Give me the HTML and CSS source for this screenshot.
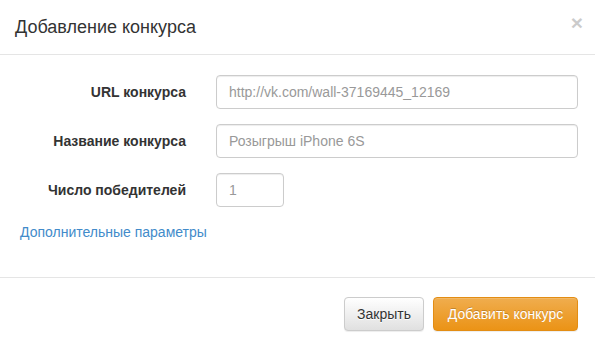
FILE: index.html
```html
<!DOCTYPE html>
<html lang="ru">
<head>
<meta charset="utf-8">
<title>Добавление конкурса</title>
<link rel="stylesheet" href="styles.css">
</head>
<body>
<div class="modal">
  <div class="modal-header">
    <h4 class="modal-title">Добавление конкурса</h4>
    <button class="close" type="button">×</button>
  </div>
  <form class="modal-body">
    <div class="form-group">
      <label class="control-label">URL конкурса</label>
      <input class="form-control" type="text" placeholder="http://vk.com/wall-37169445_12169">
    </div>
    <div class="form-group">
      <label class="control-label">Название конкурса</label>
      <input class="form-control" type="text" placeholder="Розыгрыш iPhone 6S">
    </div>
    <div class="form-group">
      <label class="control-label">Число победителей</label>
      <input class="form-control short" type="text" placeholder="1">
    </div>
    <div class="extra"><a href="#" class="extra-link">Дополнительные параметры</a></div>
  </form>
  <div class="modal-footer">
    <button class="btn btn-default" type="button">Закрыть</button>
    <button class="btn btn-warning" type="button">Добавить конкурс</button>
  </div>
</div>
</body>
</html>
```
FILE: styles.css
```css
* { box-sizing: border-box; }
html, body { margin: 0; padding: 0; background: #fff; }
body {
  font-family: "Liberation Sans", Arial, sans-serif;
  font-size: 14px;
  line-height: 20px;
  color: #333;
}
.modal { width: 595px; background: #fff; }
.modal-header {
  display: flex;
  justify-content: space-between;
  align-items: flex-start;
  padding: 14px 12px 14px 15px;
  border-bottom: 1px solid #e5e5e5;
}
.modal-title {
  margin: 0;
  font-size: 18px;
  line-height: 26px;
  font-weight: normal;
  color: #333;
}
.close {
  margin: -2px 0 0 0;
  padding: 0;
  border: 0;
  background: transparent;
  font-family: "Liberation Sans", Arial, sans-serif;
  font-size: 21px;
  line-height: 21px;
  font-weight: bold;
  color: #000;
  opacity: 0.2;
  text-shadow: 0 1px 0 #fff;
}
.modal-body {
  margin: 0;
  padding: 20px 17px 20px 20px;
}
.form-group {
  display: grid;
  grid-template-columns: 166px 1fr;
  column-gap: 30px;
  margin-bottom: 15px;
  align-items: start;
}
.control-label {
  text-align: right;
  font-weight: bold;
  padding-top: 7px;
  line-height: 20px;
}
.form-control {
  display: block;
  width: 100%;
  height: 34px;
  padding: 6px 12px;
  font-family: "Liberation Sans", Arial, sans-serif;
  font-size: 14px;
  line-height: 20px;
  color: #555;
  background: #fff;
  border: 1px solid #ccc;
  border-radius: 4px;
  box-shadow: inset 0 1px 1px rgba(0,0,0,.075);
}
.form-control::placeholder { color: #999; opacity: 1; }
.form-control.short { width: 68px; }
.extra { margin-bottom: 15px; line-height: 20px; }
.extra-link { color: #428bca; text-decoration: none; }
.modal-footer {
  display: flex;
  justify-content: flex-end;
  gap: 9px;
  padding: 19px 17px 15px;
  border-top: 1px solid #e5e5e5;
}
.btn {
  height: 34px;
  padding: 6px 12px;
  font-family: "Liberation Sans", Arial, sans-serif;
  font-size: 14px;
  line-height: 20px;
  border: 1px solid transparent;
  border-radius: 4px;
  box-shadow: inset 0 1px 0 rgba(255,255,255,.15), 0 1px 1px rgba(0,0,0,.075);
}
.btn-default {
  width: 80px;
  color: #333;
  text-shadow: 0 1px 0 #fff;
  background-image: linear-gradient(to bottom, #fff 0%, #e0e0e0 100%);
  border-color: #ccc;
}
.btn-warning {
  width: 145px;
  color: #fff;
  text-shadow: 0 -1px 0 rgba(0,0,0,.2);
  background-image: linear-gradient(to bottom, #f0ad4e 0%, #eb9316 100%);
  border-color: #e38d13;
}
```
